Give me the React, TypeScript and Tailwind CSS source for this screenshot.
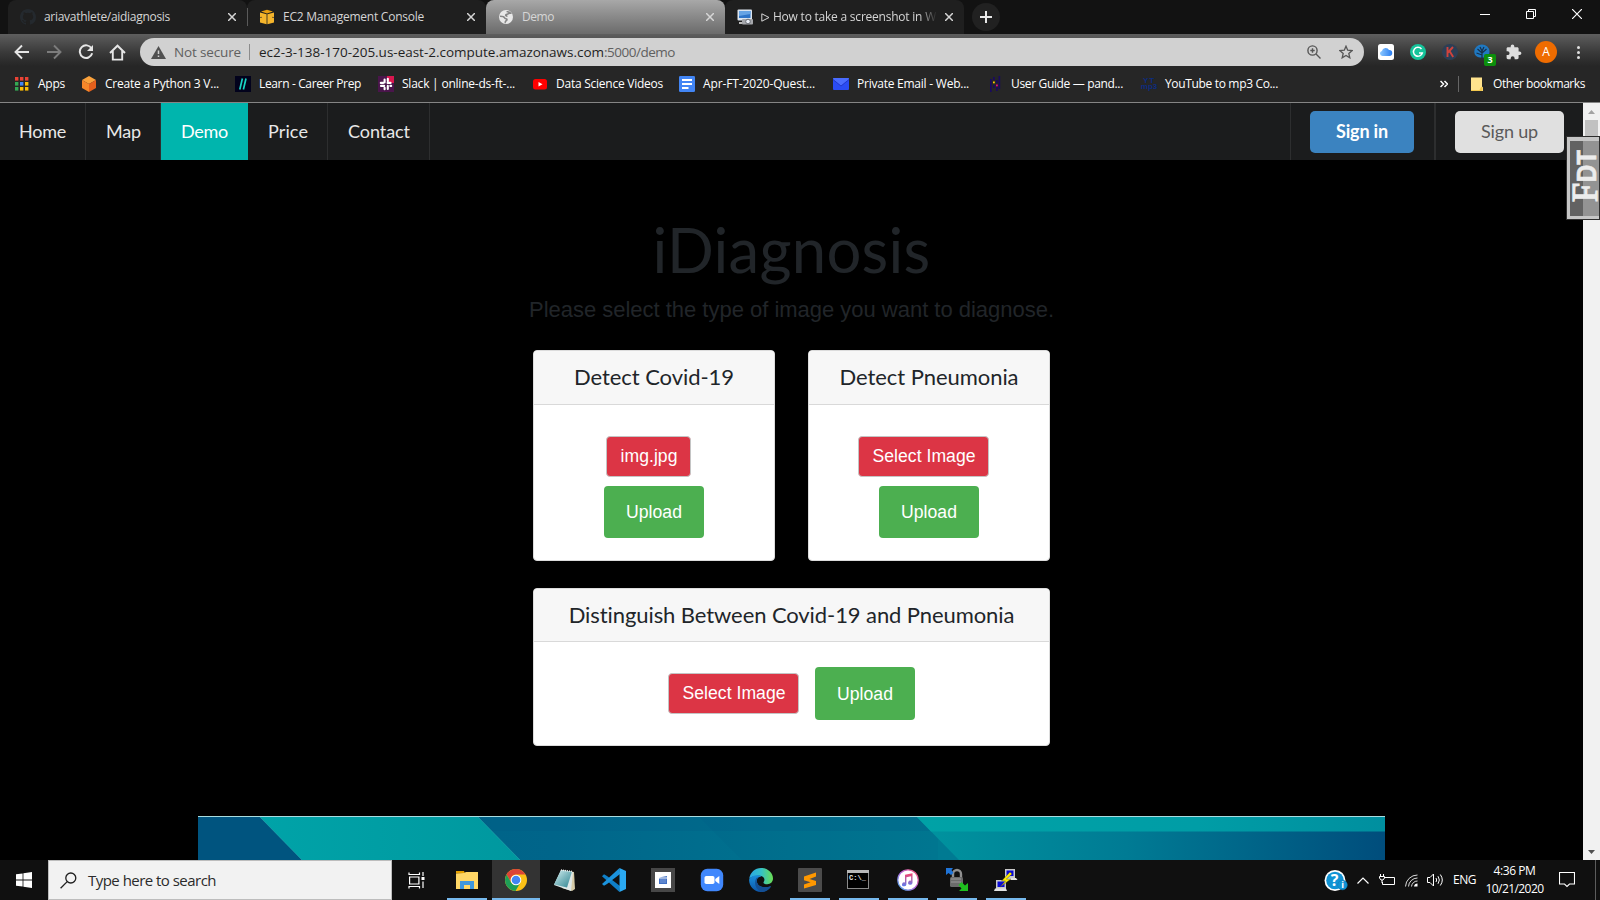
import { useLayoutEffect, useRef, type ReactNode } from "react";

/** Single line of text whose tracking is adjusted so that it spans `w` pixels. */
function Fit({ w, children, className = "" }: { w: number; children: string; className?: string }) {
  const ref = useRef<HTMLSpanElement>(null);
  useLayoutEffect(() => {
    const el = ref.current;
    if (!el) return;
    el.style.letterSpacing = "0px";
    const natural = el.getBoundingClientRect().width;
    el.style.letterSpacing = `${(w - natural) / children.length}px`;
  }, [w, children]);
  return (
    <span ref={ref} className={`inline-block shrink-0 whitespace-pre ${className}`}>
      {children}
    </span>
  );
}

function Close({ className = "" }: { className?: string }) {
  return (
    <svg className={`h-2 w-2 shrink-0 ${className}`} viewBox="0 0 8 8" stroke="currentColor" strokeWidth="1.5">
      <path d="M0 0L8 8M8 0L0 8" />
    </svg>
  );
}

function Tab({ icon, children, active }: { icon: ReactNode; children: ReactNode; active?: boolean }) {
  return (
    <div
      className={`flex h-[34px] w-[239px] shrink-0 items-center rounded-t-lg pr-[11px] pl-3 text-[12px] ${
        active ? "bg-linear-to-b from-[#a8a8a8] to-[#6b6b6b] text-[#d6d6d6]" : "bg-[#1f1f1f] text-[#d5d5d5]"
      }`}
    >
      <div className="mr-2 flex h-4 w-4 shrink-0 items-center justify-center">{icon}</div>
      <div className="flex min-w-0 flex-1 overflow-hidden">{children}</div>
      <Close className="ml-2" />
    </div>
  );
}

function GitHub() {
  return (
    <svg className="h-4 w-4" viewBox="0 0 16 16" fill="#24292e">
      <path d="M8 0C3.58 0 0 3.58 0 8c0 3.54 2.29 6.53 5.47 7.59.4.07.55-.17.55-.38v-1.49c-2.01.37-2.53-.49-2.69-.94-.09-.23-.48-.94-.82-1.13-.28-.15-.68-.52-.01-.53.63-.01 1.08.58 1.23.82.72 1.21 1.87.87 2.33.66.07-.52.28-.87.51-1.07-1.78-.2-3.64-.89-3.64-3.95 0-.87.31-1.59.82-2.15-.08-.2-.36-1.02.08-2.12 0 0 .67-.21 2.2.82a7.42 7.42 0 0 1 4 0c1.53-1.04 2.2-.82 2.2-.82.44 1.1.16 1.92.08 2.12.51.56.82 1.27.82 2.15 0 3.07-1.87 3.75-3.65 3.95.29.25.54.73.54 1.48v2.19c0 .21.15.46.55.38A8 8 0 0 0 16 8c0-4.42-3.58-8-8-8z" />
    </svg>
  );
}

function BookmarkItem({ icon, w, text, className }: { icon: ReactNode; w: number; text: string; className: string }) {
  return (
    <div className={`flex shrink-0 items-center ${className}`}>
      <div className="mr-2 flex h-4 w-4 shrink-0 items-center justify-center">{icon}</div>
      <Fit w={w}>{text}</Fit>
    </div>
  );
}

function AppsIcon() {
  const colors = ["#ea4335", "#ea4335", "#ea4335", "#34a853", "#4285f4", "#fbbc04", "#34a853", "#fbbc04", "#fbbc04"];
  return (
    <svg className="h-4 w-4" viewBox="0 0 16 16">
      {colors.map((c, i) => (
        <rect key={i} x={1 + (i % 3) * 5} y={1 + Math.floor(i / 3) * 5} width="3.4" height="3.6" fill={c} />
      ))}
    </svg>
  );
}

function Bookmarks() {
  return (
    <div className="flex h-9 items-center pl-[14px] text-[12px] text-white">
      <BookmarkItem className="w-[67px]" w={27} text="Apps" icon={<AppsIcon />} />
      <BookmarkItem
        className="w-[154px]"
        w={114}
        text="Create a Python 3 V..."
        icon={
          <svg className="h-4 w-4" viewBox="0 0 16 16">
            <path d="M8 0l7 4-7 4-7-4z" fill="#fba23c" />
            <path d="M1 4l7 4v8l-7-4z" fill="#f6872a" />
            <path d="M15 4L8 8v8l7-4z" fill="#e5601c" />
          </svg>
        }
      />
      <BookmarkItem
        className="w-[143px]"
        w={102}
        text="Learn - Career Prep"
        icon={
          <svg className="h-4 w-4" viewBox="0 0 16 16">
            <rect width="16" height="16" fill="#02021c" />
            <path d="M7.4 2.5L4.8 13.5M11 2.5L8.4 13.5" stroke="#19d3c5" strokeWidth="1.7" />
          </svg>
        }
      />
      <BookmarkItem
        className="w-[154px]"
        w={113}
        text="Slack | online-ds-ft-..."
        icon={
          <svg className="h-4 w-4" viewBox="0 0 16 16">
            <rect width="16" height="16" fill="#4a154b" />
            <path d="M9 0h7v7a6 6 0 0 1-7-7z" fill="#d8174f" />
            <g stroke="#fff" strokeWidth="2.1" strokeLinecap="round">
              <path d="M6.600 3.500v3M2.800 6.900h2.400M9.600 6.900h3M9.800 2.800v2.400M3 9.900h3.200M6.600 11.800v1.400M9.800 9.900v3M12.400 9.900h.8" />
            </g>
          </svg>
        }
      />
      <BookmarkItem
        className="w-[147px]"
        w={107}
        text="Data Science Videos"
        icon={
          <svg className="h-4 w-4" viewBox="0 0 16 16">
            <rect x="1" y="3" width="14" height="10.5" rx="2.5" fill="#f00" />
            <path d="M6.5 6v4.5l4-2.2z" fill="#fff" />
          </svg>
        }
      />
      <BookmarkItem
        className="w-[154px]"
        w={112}
        text="Apr-FT-2020-Quest..."
        icon={
          <svg className="h-4 w-4" viewBox="0 0 16 16">
            <rect width="16" height="16" rx="1.2" fill="#4285f4" />
            <path d="M3 4h10M3 8h10M3 12h6.5" stroke="#fff" strokeWidth="1.8" />
          </svg>
        }
      />
      <BookmarkItem
        className="w-[154px]"
        w={112}
        text="Private Email - Web..."
        icon={
          <svg className="h-4 w-4" viewBox="0 0 16 16">
            <rect y="2" width="16" height="12" rx="1" fill="#2a4cf5" />
            <path d="M0 3.5l8 6.5 8-6.5V3a1 1 0 0 0-1-1H1a1 1 0 0 0-1 1z" fill="#4a6cff" />
            <path d="M0 3.5l8 6.5 8-6.5" fill="none" stroke="#1a2fc0" strokeWidth=".8" />
          </svg>
        }
      />
      <BookmarkItem
        className="w-[154px]"
        w={112}
        text="User Guide — pand..."
        icon={
          <svg className="h-4 w-4" viewBox="0 0 16 16">
            <path d="M3 3h1.7v13H3zM6 1h1.7v3H6zM6 9h1.7v3H6zM9 4h1.7v3H9zM9 11h1.7v4H9zM11.5 0h1.7v13h-1.7z" fill="#190a5e" />
            <rect x="6" y="5.5" width="1.8" height="1.8" fill="#ffca00" />
            <rect x="9" y="8.5" width="1.8" height="1.8" fill="#e70488" />
          </svg>
        }
      />
      <BookmarkItem
        className="w-[298px]"
        w={113}
        text="YouTube to mp3 Co..."
        icon={
          <div className="flex flex-col items-center font-['Liberation_Sans'] text-[8px] leading-[6px] font-bold text-[#0d2c80]">
            <span className="tracking-[1px]">YT</span>
            <span>mp3</span>
          </div>
        }
      />
      <svg className="ml-[1px] h-2 w-2" viewBox="0 0 8 8" fill="none" stroke="#fff" strokeWidth="1.5">
        <path d="M.5 1l3 3-3 3M4.5 1l3 3-3 3" />
      </svg>
      <div className="ml-[10px] h-4 w-px bg-[#666]" />
      <svg className="mr-[10px] ml-3 h-[15px] w-3" viewBox="0 0 12 15">
        <path d="M0 .5h11v9l1 1V14H0z" fill="#ffe38d" />
        <path d="M0 13h8.5l1.5-3h1.5V14H0z" fill="#f2c74e" />
      </svg>
      <Fit w={92}>Other bookmarks</Fit>
    </div>
  );
}

function BrowserChrome() {
  return (
    <header className="flex h-[103px] shrink-0 flex-col border-b border-[#858585] bg-[#262626]">
      <div className="flex h-[34px] shrink-0 bg-[#121212] pl-2">
        <Tab icon={<GitHub />}>
          <Fit w={126}>ariavathlete/aidiagnosis</Fit>
        </Tab>
        <div className="z-10 -mr-px h-[18px] w-px self-center bg-[#5a5a5a]" />
        <Tab
          icon={
            <svg className="h-4 w-4" viewBox="0 0 16 16">
              <path d="M8 .8l6 1.700-6 1.900-6-1.900z" fill="#e89f12" />
              <path d="M1 3.400l6.600 1.900v10L1 13.400zM15 3.400L8.400 5.300v10l6.600-1.900z" fill="#f5b52c" />
              <path d="M1 8.500l2-.2M15 8.500l-2-.2" stroke="#1f1f1f" strokeWidth=".6" />
            </svg>
          }
        >
          <Fit w={141}>EC2 Management Console</Fit>
        </Tab>
        <Tab
          active
          icon={
            <svg className="h-4 w-4" viewBox="0 0 16 16">
              <circle cx="8" cy="8" r="7" fill="#e8e8e8" />
              <path d="M8.600 2.800c1.500-.3 3 .3 3.800 1.300-1 .1-1.600 0-2.200.6-.5.7-1.700.4-2.300 1.100-.5.6.4 1.400 1.500 1.300M2 7.300c2.300 0 4.200.2 4.700 1.600.3 1 1.500.6 2.100 1.200.5.8-.2 1.400-.8 1.700-.7.5-.5 1.400-1.200 2" fill="none" stroke="#858585" strokeWidth="1.600" />
            </svg>
          }
        >
          <Fit w={32}>Demo</Fit>
        </Tab>
        <Tab
          icon={
            <svg className="h-4 w-4" viewBox="0 0 16 16">
              <rect x=".5" y=".5" width="14.500" height="11" rx="1" fill="#dbe4ee" />
              <rect x="2" y="2" width="11.500" height="7" fill="#2f75c8" />
              <path d="M2 2h11.500v3L2 7z" fill="#67a4e4" />
              <rect x="5" y="10" width="11" height="5.500" rx="1" fill="#a6a8ac" />
              <circle cx="11" cy="12.500" r="2.300" fill="#e9eef5" stroke="#6a6e75" />
              <path d="M2 13h3v2H2z" fill="#bbb" />
            </svg>
          }
        >
          <div className="flex w-[176px] items-center overflow-hidden mask-r-from-90%">
            <svg className="mr-[3px] h-[9px] w-[9px] shrink-0" viewBox="0 0 9 9" fill="none" stroke="#d5d5d5">
              <path d="M.8.8v7.400L8 4.500z" />
            </svg>
            <Fit w={163}>How to take a screenshot in W</Fit>
          </div>
        </Tab>
        <div className="mt-[3px] ml-2 flex h-7 w-7 items-center justify-center rounded-full bg-[#212121]">
          <svg className="h-3 w-3" viewBox="0 0 12 12" stroke="#e6e6e6" strokeWidth="2">
            <path d="M6 0v12M0 6h12" />
          </svg>
        </div>
        <div className="mr-[18px] ml-auto flex items-start gap-9 pt-[9px] text-white">
          <svg className="h-[10px] w-[10px]" viewBox="0 0 10 10" stroke="currentColor"><path d="M0 5.500h10" /></svg>
          <svg className="h-[10px] w-[10px]" viewBox="0 0 10 10" fill="none" stroke="currentColor">
            <path d="M.5 2.500h7v7h-7zM2.500 2.500v-2h7v7h-2" />
          </svg>
          <svg className="h-[10px] w-[10px]" viewBox="0 0 10 10" stroke="currentColor" strokeWidth="1.200"><path d="M0 0l10 10M10 0L0 10" /></svg>
        </div>
      </div>

      <div className="flex h-8 shrink-0 items-center bg-linear-to-b from-[#5e5e5e] via-[#383838] via-60% to-[#262626] pt-1">
        <svg className="ml-[14px] h-4 w-4" viewBox="0 0 16 16" fill="none" stroke="#e6e6e6" strokeWidth="1.900">
          <path d="M15 8H2M8 1.500L1.500 8 8 14.500" />
        </svg>
        <svg className="ml-4 h-4 w-4" viewBox="0 0 16 16" fill="none" stroke="#7c7c7c" strokeWidth="1.900">
          <path d="M1 8h13M8 1.500L14.500 8 8 14.500" />
        </svg>
        <svg className="ml-4 h-4 w-4" viewBox="0 0 16 16">
          <path d="M13.600 4.500A6.300 6.300 0 1 0 14.200 9.300" fill="none" stroke="#e6e6e6" strokeWidth="2" />
          <path d="M15 1v6H9z" fill="#e6e6e6" />
        </svg>
        <svg className="ml-[15px] h-[17px] w-[17px]" viewBox="0 0 17 17" fill="none" stroke="#e6e6e6" strokeWidth="1.900">
          <path d="M1 9l7.500-7.300L16 9M3.800 7v8.600h9.400V7" />
        </svg>
        <div className="ml-[14px] flex h-7 w-[1224px] items-center rounded-full bg-[#d1d1d1] pl-[11px] text-[13.500px] text-[#606060]">
          <svg className="h-[13px] w-[15px]" viewBox="0 0 15 13">
            <path d="M7.500 0L15 13H0z" fill="#505050" />
            <path d="M7.500 4.500V8M7.500 9.500v1.600" stroke="#d1d1d1" strokeWidth="1.500" />
          </svg>
          <Fit w={67} className="ml-2">Not secure</Fit>
          <div className="mr-[9px] ml-2 h-4 w-px bg-[#8c8c8c]" />
          <Fit w={345} className="text-[#1f1f1f]">ec2-3-138-170-205.us-east-2.compute.amazonaws.com</Fit>
          <Fit w={71}>:5000/demo</Fit>
          <svg className="ml-auto h-[14px] w-[14px]" viewBox="0 0 14 14" fill="none" stroke="#555" strokeWidth="1.400">
            <circle cx="5.500" cy="5.500" r="4.600" />
            <path d="M9 9l4.500 4.500M3.300 5.500h4.400M5.500 3.300v4.400" />
          </svg>
          <svg className="mr-[11px] ml-[18px] h-[14px] w-[14px]" viewBox="0 0 14 14" fill="none" stroke="#555" strokeWidth="1.300">
            <path d="M7 1.200l1.700 4 4.400.4-3.300 2.900 1 4.300L7 10.500l-3.800 2.300 1-4.300L.9 5.600l4.400-.4z" />
          </svg>
        </div>
        <div className="ml-[14px] flex items-center gap-4">
          <svg className="h-4 w-4" viewBox="0 0 16 16">
            <defs>
              <linearGradient id="cloud" x1="0" x2="1"><stop stopColor="#8cc8ff" /><stop offset="1" stopColor="#2a7df0" /></linearGradient>
            </defs>
            <rect width="16" height="16" rx="2.500" fill="#fff" />
            <path d="M4.300 12a2.600 2.600 0 0 1-.4-5.100A3.800 3.800 0 0 1 11 6a3 3 0 0 1 .5 6z" fill="url(#cloud)" />
          </svg>
          <svg className="h-4 w-4" viewBox="0 0 16 16">
            <circle cx="8" cy="8" r="8" fill="#15c39a" />
            <path d="M11.500 5A4.500 4.500 0 1 0 12.300 9H9" fill="none" stroke="#fff" strokeWidth="1.500" />
          </svg>
          <svg className="h-4 w-4" viewBox="0 0 16 16">
            <circle cx="8" cy="8" r="8" fill="#2c3e55" />
            <path d="M5.500 3v10M11 3L6 8.500M7.500 7L11.200 13" stroke="#d0433c" strokeWidth="1.900" />
          </svg>
          <div className="relative h-4 w-4">
            <svg className="h-4 w-4" viewBox="0 0 16 16">
              <path d="M8 .5a7.500 7 0 0 1 7.500 7c0 4-2.500 6-7.500 6S.3 11.500.3 7.500A7.500 7 0 0 1 8 .5z" fill="#1f78c1" />
              <path d="M8 15V6M8 9L3.500 5M8 9l4.500-4M8 7L6 3M8 7l2-4M8 11L2.500 9" stroke="#16304c" strokeWidth="1.200" />
            </svg>
            <div className="absolute top-[10px] left-[10px] flex h-3 w-3 items-center justify-center rounded-[2px] bg-[#0c8f0c] text-[9px] font-bold text-white">3</div>
          </div>
          <svg className="h-4 w-4" viewBox="0 0 16 16" fill="#dedede">
            <path d="M13.600 7.500h-1V4.600c0-.8-.6-1.400-1.400-1.400H8.300v-1a1.800 1.800 0 0 0-3.600 0v1H2c-.8 0-1.400.6-1.400 1.400v2.600h1a1.900 1.900 0 0 1 0 3.900h-1v2.700c0 .8.600 1.400 1.400 1.400h2.700v-1a1.900 1.900 0 0 1 3.900 0v1h2.600c.8 0 1.400-.6 1.400-1.400v-2.700h1a1.800 1.800 0 0 0 0-3.600z" />
          </svg>
        </div>
        <div className="ml-[13px] flex h-[22px] w-[22px] items-center justify-center rounded-full bg-[#ef6c00] text-[12px] text-white">A</div>
        <div className="ml-5 flex flex-col gap-[2px]">
          <i className="h-[3px] w-[3px] rounded-full bg-[#e0e0e0]" />
          <i className="h-[3px] w-[3px] rounded-full bg-[#e0e0e0]" />
          <i className="h-[3px] w-[3px] rounded-full bg-[#e0e0e0]" />
        </div>
      </div>
      <Bookmarks />
    </header>
  );
}

function NavBar() {
  const item = "flex items-center border-r border-[#2d2e2f]";
  return (
    <nav className="flex h-[57px] shrink-0 bg-[#1b1c1d] font-['Lato',sans-serif] text-[18px] text-[#e8e8e8]">
      <div className={`${item} w-[86px] pl-[19px]`}><Fit w={47}>Home</Fit></div>
      <div className={`${item} w-[75px] pl-5`}><Fit w={35}>Map</Fit></div>
      <div className="flex w-[87px] items-center bg-[#00b5ad] pl-5 text-white"><Fit w={47}>Demo</Fit></div>
      <div className={`${item} w-[80px] pl-5`}><Fit w={40}>Price</Fit></div>
      <div className={`${item} w-[102px] pl-5`}><Fit w={62}>Contact</Fit></div>
      <div className="ml-auto flex items-center border-l border-[#2d2e2f] pl-[19px]">
        <button className="flex h-[42px] w-[104px] items-center justify-center rounded-[5px] bg-[#3b83c0] font-bold text-white">
          <Fit w={52}>Sign in</Fit>
        </button>
      </div>
      <div className="ml-5 flex items-center border-l-2 border-[#2d2e2f] pr-[19px] pl-[19px]">
        <button className="flex h-[42px] w-[109px] items-center justify-center rounded-[5px] bg-[#e0e0e0] text-[#5a5a5a]">
          <Fit w={57}>Sign up</Fit>
        </button>
      </div>
    </nav>
  );
}

function FilePick({ label, w, className }: { label: string; w: number; className: string }) {
  return (
    <button className={`flex items-center justify-center rounded-[4px] border border-[#c4c4c4] bg-[#dc3545] pl-px text-white ${className}`}>
      <Fit w={w}>{label}</Fit>
    </button>
  );
}

function Upload({ className }: { className: string }) {
  return (
    <button className={`flex w-[100px] items-center justify-center rounded-[4px] bg-[#4caf50] text-white ${className}`}>
      <Fit w={56}>Upload</Fit>
    </button>
  );
}

function CardHeader({ children, w, className = "h-[54px]" }: { children: string; w: number; className?: string }) {
  return (
    <div className={`flex shrink-0 items-center justify-center border-b border-[#d9d9d9] bg-[#f7f7f7] pb-[2px] font-['Lato',sans-serif] text-[22px] text-[#212529] ${className}`}>
      <Fit w={w}>{children}</Fit>
    </div>
  );
}

function Banner() {
  return (
    <svg className="mt-[70px] ml-[198px] h-11 w-[1187px] shrink-0" viewBox="198 816 1187 44" preserveAspectRatio="none">
      <defs>
        <linearGradient id="mid" x1="0" x2="1">
          <stop stopColor="#005f84" />
          <stop offset=".3" stopColor="#00658a" />
          <stop offset=".62" stopColor="#007a92" />
          <stop offset="1" stopColor="#007c92" />
        </linearGradient>
        <linearGradient id="teal" x1="0" x2="1">
          <stop stopColor="#00a3a8" />
          <stop offset="1" stopColor="#00989f" />
        </linearGradient>
        <linearGradient id="end" x1="0" x2="1">
          <stop stopColor="#00949f" />
          <stop offset=".45" stopColor="#007b94" />
          <stop offset="1" stopColor="#004d7c" />
        </linearGradient>
        <linearGradient id="top" x1="0" x2="1">
          <stop stopColor="#00a2a6" />
          <stop offset=".6" stopColor="#009da6" />
          <stop offset="1" stopColor="#008f9f" />
        </linearGradient>
      </defs>
      <rect x="198" y="816" width="1187" height="44" fill="url(#mid)" />
      <path d="M698 816h240v44H742z" fill="#005a80" opacity=".12" />
      <path d="M477 816h440l15 15H490z" fill="#005580" opacity=".2" />
      <path d="M198 816h61l43 44H198z" fill="#00547f" />
      <path d="M259 816h218l43 44H302z" fill="url(#teal)" />
      <path d="M259 816l43 44M477 816l43 44" stroke="#39b5b8" strokeWidth=".7" opacity=".6" />
      <path d="M916 816h469v44H959z" fill="url(#end)" />
      <path d="M916 816h469v15.500H931z" fill="url(#top)" />
      <rect x="198" y="816" width="1187" height="1" fill="#a9dce0" />
    </svg>
  );
}

function Page() {
  return (
    <div className="flex h-[757px] min-w-0 flex-1 flex-col overflow-hidden bg-black font-['Liberation_Sans',sans-serif] text-[17.6px]">
      <NavBar />
      <div className="flex shrink-0 flex-col items-center pt-[52px] text-[#212529]">
        <h1 className="font-['Lato',sans-serif] text-[61.6px] leading-[74px]"><Fit w={278}>iDiagnosis</Fit></h1>
        <p className="mt-[10px] text-[22px] leading-[27px]"><Fit w={525}>Please select the type of image you want to diagnose.</Fit></p>
      </div>
      <div className="mx-auto mt-[27px] flex w-[517px] shrink-0 flex-col gap-[27px]">
        <div className="flex justify-between">
          <section className="flex h-[211px] w-[242px] flex-col overflow-hidden rounded-[4px] border border-[#dcdcdc] bg-white">
            <CardHeader w={160}>Detect Covid-19</CardHeader>
            <div className="flex flex-col gap-[9px] pt-[31px]">
              <FilePick label="img.jpg" w={57} className="ml-[72px] h-[41px] w-[85px] pb-px" />
              <Upload className="ml-[70px] h-[52px]" />
            </div>
          </section>
          <section className="flex h-[211px] w-[242px] flex-col overflow-hidden rounded-[4px] border border-[#dcdcdc] bg-white">
            <CardHeader w={179}>Detect Pneumonia</CardHeader>
            <div className="flex flex-col gap-[9px] pt-[31px]">
              <FilePick label="Select Image" w={103} className="ml-[49px] h-[41px] w-[131px] pb-px" />
              <Upload className="ml-[70px] h-[52px]" />
            </div>
          </section>
        </div>
        <section className="flex h-[158px] flex-col overflow-hidden rounded-[4px] border border-[#dcdcdc] bg-white">
          <CardHeader w={446} className="h-[53px]">Distinguish Between Covid-19 and Pneumonia</CardHeader>
          <div className="flex items-center justify-center gap-4 pt-[25px]">
            <FilePick label="Select Image" w={103} className="h-[41px] w-[131px]" />
            <Upload className="h-[53px] pt-px" />
          </div>
        </section>
      </div>
      <Banner />
    </div>
  );
}

function ScrollBar() {
  return (
    <div className="flex w-[17px] shrink-0 flex-col items-center bg-[#f1f1f1]">
      <svg className="h-[17px] w-[17px]" viewBox="0 0 17 17"><path d="M8.500 7l3.500 4H5z" fill="#a3a3a3" /></svg>
      <div className="h-[18px] w-[13px] bg-[#c1c1c1]" />
      <svg className="mt-auto h-[17px] w-[17px]" viewBox="0 0 17 17"><path d="M8.500 11L5 7h7z" fill="#505050" /></svg>
    </div>
  );
}

function SideBadge() {
  return (
    <div className="absolute top-[136px] right-0 h-[84px] w-[34px] border border-[#2e2e2e] bg-[#c6c6c6] pt-1 pb-[3px] pl-[3px]">
      <div className="flex h-[75px] w-full items-center justify-center bg-linear-to-r from-[#626262] from-45% to-[#939393] to-45%">
        <svg className="h-[75px] w-[29px] overflow-visible" viewBox="0 0 29 75">
          <g transform="translate(27 61) rotate(-90)" fill="#ececec" stroke="#ececec">
            <text x="0" y="0" fontFamily="Liberation Serif" fontSize="36" strokeWidth="1.400" textLength="19" lengthAdjust="spacingAndGlyphs">F</text>
            <text x="20" y="-1" fontFamily="Liberation Sans" fontWeight="bold" fontSize="27" strokeWidth=".6" textLength="32" lengthAdjust="spacingAndGlyphs">DT</text>
          </g>
        </svg>
      </div>
    </div>
  );
}

function Slot({ children, open, active }: { children: ReactNode; open?: boolean; active?: boolean }) {
  return (
    <div className={`mr-px flex h-10 w-12 shrink-0 flex-col items-center ${active ? "bg-[#333]" : ""}`}>
      <div className="flex h-[38px] w-full items-center justify-center pt-[2px]">{children}</div>
      {active && <div className="h-[2px] w-full bg-[#76b9ed]" />}
      {open && <div className="h-[2px] w-10 bg-[#76b9ed]" />}
    </div>
  );
}

function TaskBar() {
  const ic = "h-6 w-6";
  return (
    <footer className="flex h-10 shrink-0 bg-[#101010] text-white">
      <div className="flex w-12 items-center justify-center">
        <svg className="h-4 w-4" viewBox="0 0 16 16" fill="#fff">
          <path d="M0 2.300L6.600 1.400v6.200H0zM7.400 1.200L16 0v7.600H7.400zM0 8.400h6.600v6.200L0 13.700zM7.400 8.400H16V16l-8.600-1.200z" />
        </svg>
      </div>
      <div className="flex w-[344px] items-center border border-[#bdbdbd] bg-[#f2f2f2] pl-[11px] text-[15px] text-[#2b2b2b]">
        <svg className="h-[17px] w-[17px]" viewBox="0 0 17 17" fill="none" stroke="#1f1f1f" strokeWidth="1.300">
          <circle cx="10.800" cy="6" r="5" />
          <path d="M7.200 9.600L.6 16.200" />
        </svg>
        <Fit w={128} className="ml-[11px]">Type here to search</Fit>
      </div>
      <div className="flex w-[51px] items-center justify-center pr-[3px]">
        <svg className="h-[17px] w-[17px]" viewBox="0 0 17 17" fill="none" stroke="#fff" strokeWidth="1.200">
          <path d="M1 .5v2h10.500v-2M1 16.500v-2h10.500v2M1.600 5h9.300v7H1.600zM15 0v4M15 9.500V16" />
          <rect x="13.500" y="5" width="3" height="3" fill="#fff" stroke="none" />
        </svg>
      </div>
      <Slot open>
        <svg className={ic} viewBox="0 0 24 24">
          <path d="M1 3h8l1 2.500H1z" fill="#e6a100" />
          <path d="M1 5.500L9 5l2-1h12v17H1z" fill="#ffd766" />
          <path d="M5 21v-8h14v8h-4v-4H9v4z" fill="#3f97dd" />
        </svg>
      </Slot>
      <Slot active>
        <svg className={ic} viewBox="0 0 24 24">
          <circle cx="12" cy="12" r="11" fill="#fbc116" />
          <path d="M2.500 6.500A11 11 0 0 1 21.500 6.500H12a5.500 5.500 0 0 0-4.800 8.200z" fill="#db4437" />
          <path d="M2.500 6.500A11 11 0 0 0 11.500 23l4.800-8.300a5.500 5.500 0 0 1-9.100 0z" fill="#1e9e57" />
          <circle cx="12" cy="12" r="5.300" fill="#fff" />
          <circle cx="12" cy="12" r="4.300" fill="#4285f4" />
        </svg>
      </Slot>
      <Slot>
        <svg className={ic} viewBox="0 0 24 24">
          <defs>
            <linearGradient id="pad" x1="0" y1="0" x2="1" y2="1"><stop stopColor="#d9f3f5" /><stop offset=".5" stopColor="#7eb8bf" /><stop offset="1" stopColor="#2f8290" /></linearGradient>
          </defs>
          <path d="M8 2l13 2 1 17-3 2-10-3z" fill="#d6cba8" />
          <path d="M8 2l12 2-2 19L1 17z" fill="#dfe8e8" />
          <path d="M8 2l11 1.500-5 16L1 16.500z" fill="url(#pad)" />
          <path d="M8 2l11 1.500" stroke="#eee" strokeWidth="1.500" strokeDasharray="1 1" />
        </svg>
      </Slot>
      <Slot>
        <svg className={ic} viewBox="0 0 24 24">
          <path d="M17.500 24L0 8.200 2 6.300l3 1.700L18 18z" fill="#0f7fc7" />
          <path d="M17.500 0L0 16l2 1.800 3-1.800L18 6z" fill="#1b93dd" />
          <path d="M17.500 0L24 3v18l-6.500 3z" fill="#2aa9f2" />
        </svg>
      </Slot>
      <Slot>
        <svg className={ic} viewBox="0 0 24 24">
          <rect width="24" height="24" fill="#474747" />
          <rect x="4" y="4" width="16" height="16" fill="#fff" />
          <path d="M8 9.500l8-1.500v1.500zM8 10.500h8V16H8z" fill="#4170c4" />
          <path d="M9.500 12h5M9.500 14h5" stroke="#b8cbee" strokeDasharray="1 1" />
        </svg>
      </Slot>
      <Slot>
        <svg className={ic} viewBox="0 0 24 24">
          <rect x=".8" y=".8" width="22.400" height="22.400" rx="6.500" fill="#4087fc" />
          <rect x="4.500" y="8" width="10" height="8" rx="1.800" fill="#fff" />
          <path d="M15.300 11l4-3v8l-4-3z" fill="#fff" />
        </svg>
      </Slot>
      <Slot>
        <svg className={ic} viewBox="0 0 24 24">
          <defs>
            <linearGradient id="edgeTop" x1="0" x2="1"><stop stopColor="#2aa7e4" /><stop offset=".5" stopColor="#34c1c8" /><stop offset="1" stopColor="#6ade52" /></linearGradient>
            <linearGradient id="edgeLow" x1="0" y1="0" x2="0" y2="1"><stop stopColor="#1a8fdc" /><stop offset="1" stopColor="#0c55a8" /></linearGradient>
          </defs>
          <path d="M.2 11C1 4.500 6 0 12 0c7 0 12 5 12 10.500 0 3.500-2.600 5.700-5.700 5.700-3 0-4.400-1-3.600-2.200 1.800-2.400.2-6-4-6.300C5 7.500 1.500 9 .2 11z" fill="url(#edgeTop)" />
          <path d="M.1 11.500C2 7.500 9 6 12.500 8.600 8.500 8.700 7 12 8.200 15c1.600 4 7.500 5.500 13.800 3.200C20 21.800 16 24 12 24 5 24-.2 18 .1 11.500z" fill="url(#edgeLow)" />
          <path d="M8 9.500C5 12.500 5 21 12.500 24c4 0 7.800-2.300 9.500-5.800-6.300 2.300-12.200.8-13.800-3.200-.8-2-.6-4 .5-5.500z" fill="#144f94" />
        </svg>
      </Slot>
      <Slot open>
        <svg className={ic} viewBox="0 0 24 24">
          <rect width="24" height="24" rx="1" fill="#4b4b4b" />
          <path d="M6 8.500L18 4.500v4L11.500 11 18 13v4L6 20.500v-4l6.500-2.200L6 12.200z" fill="#ff9800" />
        </svg>
      </Slot>
      <Slot open>
        <svg className={`${ic} mr-[2px]`} viewBox="0 0 24 24">
          <rect x="1.500" y="2.500" width="21" height="18" fill="#000" stroke="#8a8a8a" />
          <rect x="1" y="2" width="22" height="3" fill="#b8b8b8" />
          <text x="3" y="11.500" fontSize="7" fontWeight="bold" textLength="17" fontFamily="Liberation Mono" fill="#e8e8e8">C:\_</text>
        </svg>
      </Slot>
      <Slot open>
        <svg className={ic} viewBox="0 0 24 24">
          <defs>
            <linearGradient id="ring" x1="0" y1="1" x2="1" y2="0"><stop stopColor="#48b6f0" /><stop offset=".5" stopColor="#b66be0" /><stop offset="1" stopColor="#f9556c" /></linearGradient>
            <linearGradient id="note" x1="0" y1="0" x2="0" y2="1"><stop stopColor="#f8416a" /><stop offset="1" stopColor="#5b7df0" /></linearGradient>
          </defs>
          <circle cx="12" cy="12" r="10.200" fill="#fff" stroke="url(#ring)" strokeWidth="1.200" />
          <path d="M9 6.800l7.500-1.600v9.500a2.200 2 0 1 1-1.400-1.900V8.300l-4.700 1v7a2.200 2 0 1 1-1.400-1.800z" fill="url(#note)" />
        </svg>
      </Slot>
      <Slot open>
        <svg className={ic} viewBox="0 0 24 24">
          <path d="M8 10V6a4 4 0 0 1 8 0v4" fill="none" stroke="#909090" strokeWidth="2.400" />
          <rect x="5" y="9" width="13" height="10" rx="1.500" fill="#6c6c6c" />
          <path d="M6 11h10M6 14h10" stroke="#9a9a9a" />
          <path d="M1 0h7L6.500 2 8.500 5 6 7 3.500 5 1 7z" fill="#1f74d8" />
          <path d="M23 23h-9l2.500-2.500L13.500 17l3-3 3.500 3.500L23 15z" fill="#1fc01f" />
        </svg>
      </Slot>
      <Slot open>
        <svg className={ic} viewBox="0 0 24 24">
          <path d="M11 1h10v9H11zM2 12h10v9H2z" fill="#c9c9c9" />
          <path d="M12.500 2.500h7V8h-7zM3.500 13.500h7V19h-7z" fill="#0a0ad8" />
          <path d="M12 10h10l1.500 2h-10zM1 20.500h11l1 2.500H0z" fill="#e3e3e3" />
          <path d="M16 4l-8.500 9h4L6 19l11-8h-4.500L18 6z" fill="#ffee00" stroke="#333" strokeWidth=".4" />
        </svg>
      </Slot>

      <div className="ml-auto flex items-center">
        <svg className="h-[23px] w-[22px] overflow-visible" viewBox="0 0 22 23">
          <circle cx="10" cy="11.500" r="10.500" fill="#fff" />
          <circle cx="10" cy="11.500" r="8.800" fill="#1193d4" />
          <text x="9.500" y="17" fontSize="16" fontWeight="bold" textAnchor="middle" fill="#fff" fontFamily="Open Sans">?</text>
          <circle cx="17.500" cy="16" r="4.800" fill="#1193d4" stroke="#0b7db8" strokeWidth=".5" />
          <text x="17.500" y="19.300" fontSize="9" fontWeight="bold" textAnchor="middle" fill="#fff" fontFamily="Open Sans">i</text>
        </svg>
        <svg className="ml-[10px] h-[7px] w-3" viewBox="0 0 12 7" fill="none" stroke="#fff" strokeWidth="1.200"><path d="M.5 6.500L6 1l5.500 5.500" /></svg>
        <svg className="ml-[10px] h-3 w-4" viewBox="0 0 16 12" fill="none" stroke="#fff">
          <path d="M6 3.500h9.500v7H3.500V8M1.500 0v2.500M4.500 0v2.500M.5 2.500h5v1.500L4 6H2L.5 4zM3 6v3" />
        </svg>
        <svg className="ml-[10px] h-[14px] w-[14px]" viewBox="0 0 14 14" fill="none" stroke="#fff">
          <path d="M.5 13.500A12 12 0 0 1 12.500 2M3.500 13.500A9 9 0 0 1 12.500 5M6.500 13.500A6 6 0 0 1 12.500 8" opacity=".85" />
          <path d="M9 13.500A3.500 3.500 0 0 1 12.500 10.500v3z" fill="#fff" stroke="none" />
        </svg>
        <svg className="ml-2 h-[14px] w-[17px]" viewBox="0 0 17 14" fill="none" stroke="#fff">
          <path d="M.5 4.500h2.500L6.500 1v12L3 9.500H.5zM9 5q1.300 2 0 4M11 3.200q2.700 3.800 0 7.600M13.300 1.500q4 5.500 0 11" />
        </svg>
        <div className="ml-[9px] flex text-[12px]"><Fit w={23}>ENG</Fit></div>
        <div className="mr-px ml-[9px] flex w-[59px] flex-col items-center text-[12px] leading-[18px]">
          <Fit w={42}>4:36 PM</Fit>
          <Fit w={58}>10/21/2020</Fit>
        </div>
        <svg className="ml-[14px] h-4 w-4" viewBox="0 0 16 16" fill="none" stroke="#fff" strokeWidth="1.100">
          <path d="M.5.5h15v11.500h-5L8 14.500 5.500 12h-5z" />
        </svg>
        <div className="mr-1 ml-5 h-10 w-px bg-[#5c5c5c]" />
      </div>
    </footer>
  );
}

export default function App() {
  return (
    <div className="relative flex h-[900px] w-[1600px] flex-col overflow-hidden bg-black font-['Open_Sans','Noto_Sans',sans-serif]">
      <BrowserChrome />
      <div className="flex min-h-0 flex-1">
        <Page />
        <ScrollBar />
      </div>
      <TaskBar />
      <SideBadge />
    </div>
  );
}
